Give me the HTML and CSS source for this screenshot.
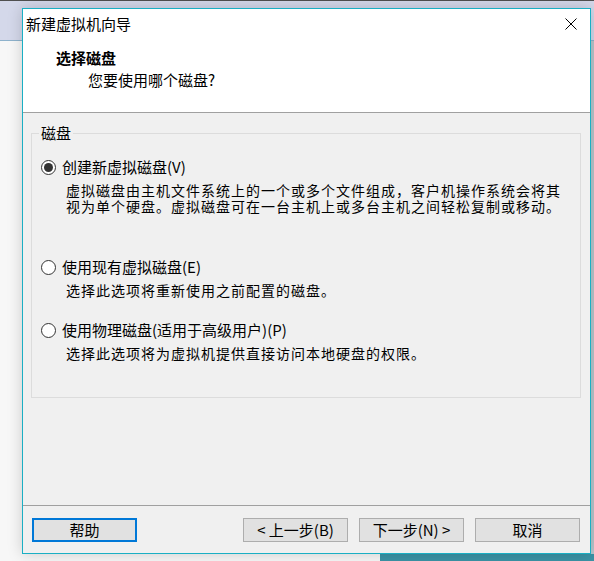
FILE: index.html
```html
<!DOCTYPE html>
<html lang="zh-CN">
<head>
<meta charset="utf-8">
<title>新建虚拟机向导</title>
<link rel="stylesheet" href="styles.css">
</head>
<body>
<div class="desktop">
  <div class="dialog">
    <div class="header">
      <div class="titlebar">
        <span class="title">新建虚拟机向导</span>
        <svg class="close" width="12" height="12" viewBox="0 0 12 12">
          <path d="M0.5 0.5 L11.5 11.5 M11.5 0.5 L0.5 11.5" stroke="#000" stroke-width="1" fill="none"/>
        </svg>
      </div>
      <div class="h-title">选择磁盘</div>
      <div class="h-sub">您要使用哪个磁盘?</div>
    </div>
    <div class="content">
      <div class="group">
        <div class="legend">磁盘</div>
        <div class="option opt-1">
          <span class="radio checked"></span>
          <span class="label">创建新虚拟磁盘(V)</span>
        </div>
        <div class="desc">虚拟磁盘由主机文件系统上的一个或多个文件组成，客户机操作系统会将其<br>视为单个硬盘。虚拟磁盘可在一台主机上或多台主机之间轻松复制或移动。</div>
        <div class="option opt-2">
          <span class="radio"></span>
          <span class="label">使用现有虚拟磁盘(E)</span>
        </div>
        <div class="desc">选择此选项将重新使用之前配置的磁盘。</div>
        <div class="option opt-3">
          <span class="radio"></span>
          <span class="label">使用物理磁盘(适用于高级用户)(P)</span>
        </div>
        <div class="desc">选择此选项将为虚拟机提供直接访问本地硬盘的权限。</div>
      </div>
    </div>
    <div class="footer">
      <button class="btn btn-default">帮助</button>
      <span class="spacer"></span>
      <button class="btn">&lt; 上一步(B)</button>
      <button class="btn btn-gap">下一步(N) &gt;</button>
      <button class="btn btn-gap">取消</button>
    </div>
  </div>
</div>
</body>
</html>
```

FILE: styles.css
```css
html, body {
  margin: 0;
  padding: 0;
}

body {
  width: 594px;
  height: 561px;
  overflow: hidden;
  font-family: "Noto Sans CJK SC", "Noto Sans", sans-serif;
  color: #000;
  background:
    linear-gradient(#505050 0 1px, #d4d8ea 1px 40px, #8eb2cc 40px 41px, transparent 41px) top left / 100% 41px no-repeat,
    linear-gradient(to right, transparent 380px, #3b93a6 380px) bottom left / 100% 7px no-repeat,
    linear-gradient(to right, transparent 591px, #b9c6cc 591px) left 41px / 100% 100% no-repeat,
    #f7f7f7;
}

.desktop {
  padding: 8px 0 0 22px;
}

.dialog {
  box-sizing: border-box;
  width: 569px;
  height: 546px;
  border: 1px solid #1aafc4;
  background: #f0f0f0;
  display: flex;
  flex-direction: column;
  box-shadow: 0 0 14px rgba(0, 0, 0, 0.18);
}

.header {
  background: #fff;
  padding: 5px 0 22px 0;
  border-bottom: 1px solid #a0a0a0;
}

.titlebar {
  display: flex;
  align-items: center;
  height: 20px;
  padding: 0 13px 0 3px;
}

.title {
  flex: 1;
  font-size: 15px;
  line-height: 20px;
}

.close {
  display: block;
}

.h-title {
  margin-top: 14px;
  padding-left: 33px;
  font-size: 15px;
  line-height: 20px;
  font-weight: 700;
}

.h-sub {
  margin-top: 2px;
  padding-left: 65px;
  font-size: 15px;
  line-height: 20px;
}

.content {
  flex: 1;
  padding: 20px 9px 0 8px;
}

.group {
  border: 1px solid #dcdcdc;
  padding: 0 0 36px 9px;
  font-size: 15px;
}

.legend {
  width: fit-content;
  margin: -11px 0 0 -2px;
  padding: 0 2px;
  line-height: 20px;
  background: #f0f0f0;
}

.option {
  display: flex;
  align-items: center;
  gap: 6px;
  height: 20px;
  line-height: 20px;
}

.opt-1 { margin-top: 14px; }
.opt-2 { margin-top: 43px; }
.opt-3 { margin-top: 22px; }

.radio {
  box-sizing: border-box;
  width: 15px;
  height: 15px;
  border: 1px solid #333;
  border-radius: 50%;
  background: #fff;
  display: flex;
  align-items: center;
  justify-content: center;
  flex: none;
}

.radio.checked::after {
  content: "";
  width: 9px;
  height: 9px;
  border-radius: 50%;
  background: #333;
}

.desc {
  margin-top: 5px;
  padding-left: 25px;
  font-size: 14px;
  letter-spacing: 1px;
  line-height: 16px;
  white-space: nowrap;
}

.footer {
  border-top: 1px solid #a0a0a0;
  padding: 12px 10px 11px 9px;
  display: flex;
  align-items: center;
}

.spacer {
  flex: 1;
}

.btn {
  box-sizing: border-box;
  width: 105px;
  height: 24px;
  margin: 0;
  padding: 0;
  border: 1px solid #adadad;
  background: #e1e1e1;
  font-family: "Noto Sans CJK SC", "Noto Sans", sans-serif;
  font-size: 15px;
  line-height: 20px;
  color: #000;
  text-align: center;
}

.btn-default {
  border: 2px solid #0078d7;
}

.btn-gap {
  margin-left: 11px;
}
```
